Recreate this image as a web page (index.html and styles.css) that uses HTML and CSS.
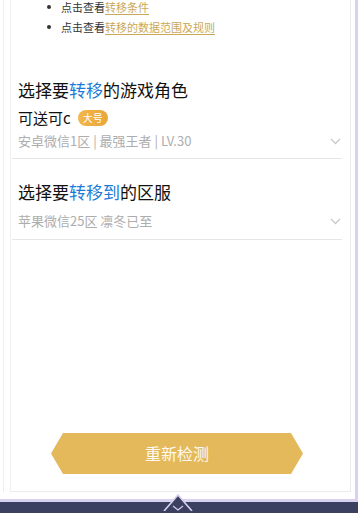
FILE: index.html
```html
<!DOCTYPE html>
<html lang="zh-CN">
<head>
<meta charset="utf-8">
<link rel="stylesheet" href="styles.css">
</head>
<body>
<div class="page">
  <div class="outer">
    <div class="frame">
      <div class="inner">
        <ul class="tips">
          <li>点击查看<a class="link">转移条件</a></li>
          <li>点击查看<a class="link">转移的数据范围及规则</a></li>
        </ul>
        <div class="section first">
          <h2 class="title">选择要<span class="hl">转移</span>的游戏角色</h2>
          <div class="role">可送可c<span class="badge">大号</span></div>
          <div class="select">
            <span class="value">安卓微信1区 | 最强王者 | LV.30</span>
            <svg class="chev" width="11" height="7" viewBox="0 0 11 7"><path d="M1 1l4.5 4.5L10 1" fill="none" stroke="#c8c8c8" stroke-width="1.3"/></svg>
          </div>
        </div>
        <div class="section second">
          <h2 class="title">选择要<span class="hl">转移到</span>的区服</h2>
          <div class="select near">
            <span class="value">苹果微信25区 凛冬已至</span>
            <svg class="chev" width="11" height="7" viewBox="0 0 11 7"><path d="M1 1l4.5 4.5L10 1" fill="none" stroke="#c8c8c8" stroke-width="1.3"/></svg>
          </div>
        </div>
        <button class="btn">重新检测</button>
      </div>
    </div>
  </div>
  <svg class="notch" width="30" height="18" viewBox="0 0 30 18"><path d="M1 18L15 2L29 18" fill="#3c4060" stroke="#d6cfee" stroke-width="1.6"/><path d="M10 13l5 4l5 -4" fill="none" stroke="#d6cfee" stroke-width="1.2"/></svg>
</div>
</body>
</html>
```
FILE: styles.css
```css
html, body {
  margin: 0;
  padding: 0;
}
body {
  font-family: "Noto Sans CJK SC", "Noto Sans", sans-serif;
  background: #3c4060;
}
.page {
  position: relative;
  width: 358px;
  height: 513px;
  overflow: hidden;
  background: #3c4060;
}
.outer {
  height: 499px;
  background: #fff;
  border-right: 3px solid #d9d1f0;
  border-bottom: 3px solid #d9d1f0;
  padding-left: 3px;
  box-sizing: content-box;
}
.frame {
  height: 492px;
  border-left: 1px solid #f3ecee;
  padding-left: 6px;
  padding-right: 4px;
}
.inner {
  height: 491px;
  border-left: 1px solid #f0f0f2;
  border-right: 1px solid #ececf0;
  border-bottom: 1px solid #ececf0;
  display: flex;
  flex-direction: column;
}
.tips {
  list-style: none;
  margin: -3px 0 0 0;
  padding: 0 0 0 36px;
  font-size: 11px;
  line-height: 20px;
  color: #333;
}
.tips li {
  display: flex;
  align-items: center;
}
.tips li::before {
  content: "";
  width: 4px;
  height: 4px;
  border-radius: 50%;
  background: #333;
  margin-right: 10px;
}
.link {
  color: #c9a85b;
  text-decoration: underline;
  text-underline-offset: 2px;
}
.section {
  margin: 0 8px 0 1px;
  padding-left: 6px;
  border-bottom: 1px solid #e6e6e6;
}
.section.first {
  margin-top: 41px;
  padding-bottom: 7px;
}
.section.second {
  margin-top: 21px;
  padding-bottom: 8px;
}
.title {
  margin: 0;
  font-size: 17px;
  font-weight: 400;
  line-height: 24px;
  color: #111;
}
.hl {
  color: #1c7bd6;
}
.role {
  margin-top: 5px;
  display: flex;
  align-items: center;
  font-size: 15px;
  line-height: 22px;
  color: #111;
}
.badge {
  margin-left: 7px;
  height: 16px;
  padding: 0 5px;
  border-radius: 8px;
  background: linear-gradient(90deg, #f2b64a, #eaa73a);
  color: #fff;
  font-size: 10px;
  line-height: 16px;
}
.select {
  margin-top: 2px;
  display: flex;
  align-items: center;
  justify-content: space-between;
  padding-right: 1px;
  font-size: 13px;
  line-height: 20px;
  color: #adadad;
}
.select.near {
  margin-top: 7px;
}
.chev {
  display: block;
}
.btn {
  margin: auto 0 17px 40px;
  width: 252px;
  height: 41px;
  border: 0;
  padding: 0;
  background: #e4b95b;
  clip-path: polygon(0 50%, 12px 0, calc(100% - 12px) 0, 100% 50%, calc(100% - 12px) 100%, 12px 100%);
  color: #fffaf0;
  font-family: "Noto Sans CJK SC", "Noto Sans", sans-serif;
  font-size: 16px;
  line-height: 41px;
}
.notch {
  position: absolute;
  left: 163px;
  top: 493px;
}
```
